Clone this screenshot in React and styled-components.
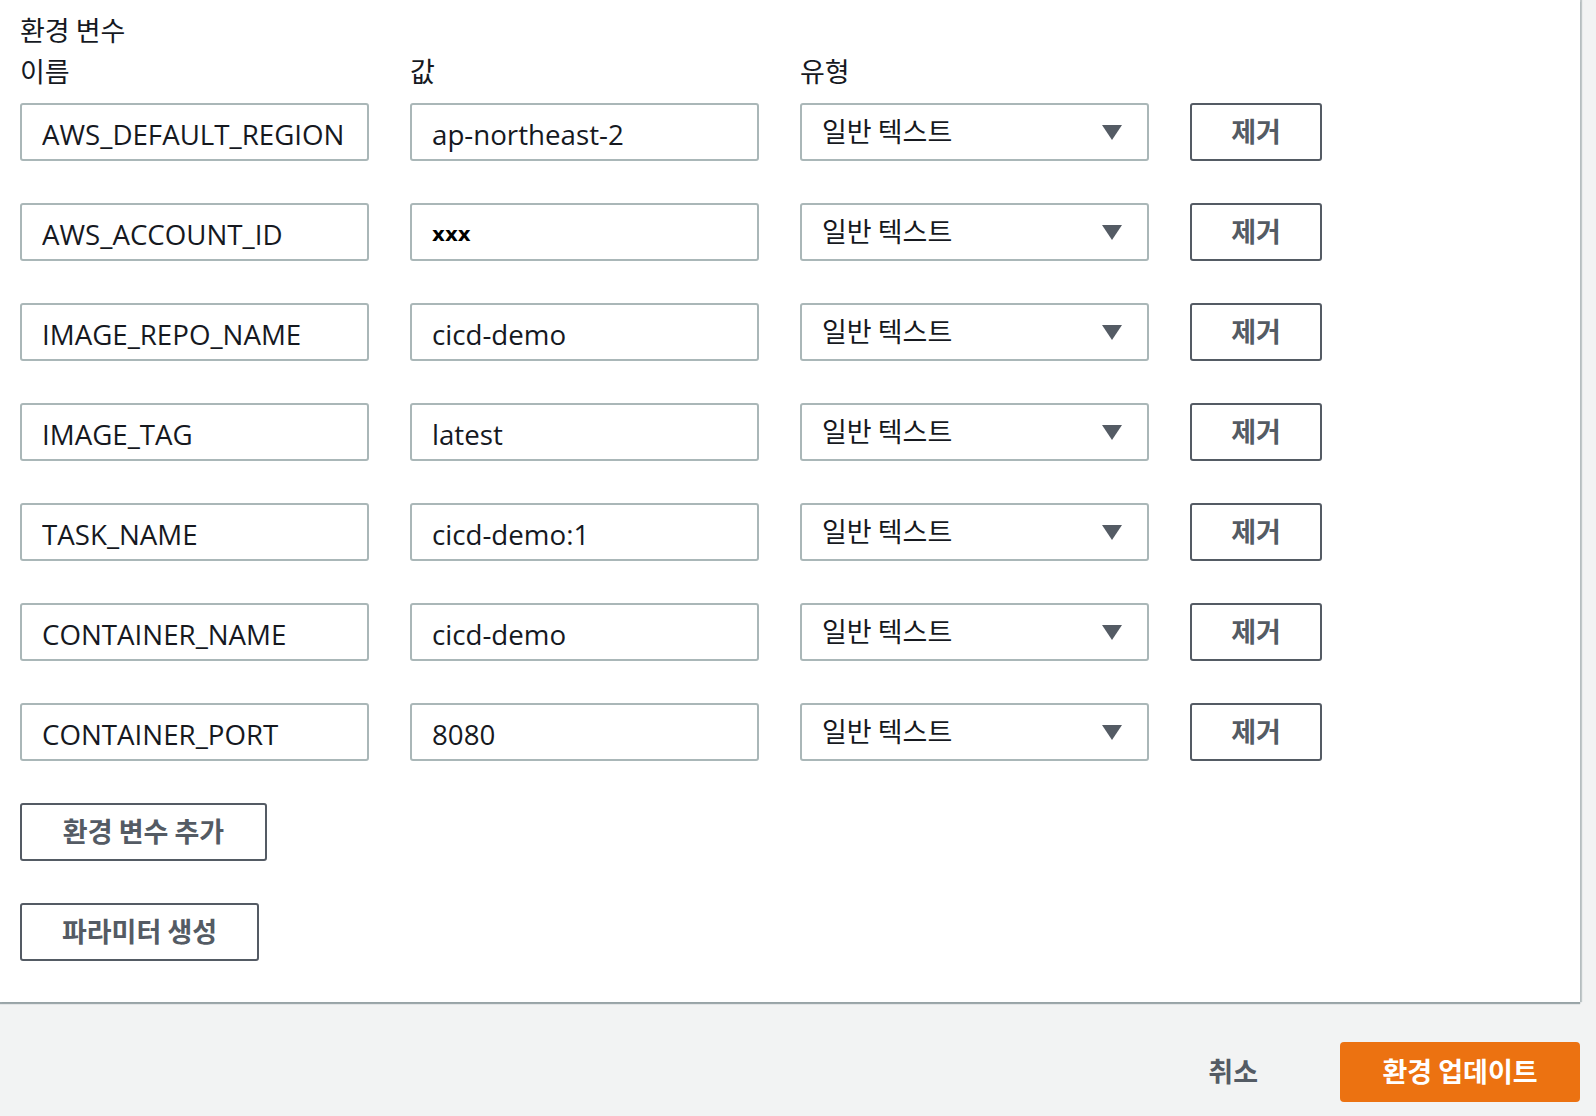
import React, { useState } from "react";
import styled, { createGlobalStyle } from "styled-components";

const GlobalStyle = createGlobalStyle`
  html, body {
    margin: 0;
    padding: 0;
    background: #f2f3f3;
  }
  body {
    font-family: "Noto Sans CJK KR", "Noto Sans", sans-serif;
    color: #16191f;
  }
`;

const initialVars = [
  { name: "AWS_DEFAULT_REGION", value: "ap-northeast-2" },
  { name: "AWS_ACCOUNT_ID", value: "xxx", masked: true },
  { name: "IMAGE_REPO_NAME", value: "cicd-demo" },
  { name: "IMAGE_TAG", value: "latest" },
  { name: "TASK_NAME", value: "cicd-demo:1" },
  { name: "CONTAINER_NAME", value: "cicd-demo" },
  { name: "CONTAINER_PORT", value: "8080" },
];

const App = () => {
  const [vars, setVars] = useState(initialVars);

  const changeHandle = (idx, key) => (e) => {
    const next = vars.slice();
    next[idx] = { ...next[idx], [key]: e.target.value };
    setVars(next);
  };

  const removeClick = (idx) => (evt) => {
    evt.preventDefault();
    setVars(vars.filter((_, i) => i !== idx));
  };

  const addClick = (evt) => {
    evt.preventDefault();
    setVars([...vars, { name: "", value: "" }]);
  };

  return (
    <StyledPage>
      <GlobalStyle />
      <StyledPanel>
        <StyledTitle>환경 변수</StyledTitle>
        <StyledGrid>
          <StyledColLabel>이름</StyledColLabel>
          <StyledColLabel>값</StyledColLabel>
          <StyledColLabel>유형</StyledColLabel>
          <span />
        </StyledGrid>

        <StyledRows>
          {vars.map((v, i) => (
            <React.Fragment key={i}>
              <StyledInput value={v.name} onChange={changeHandle(i, "name")} />
              <StyledInput
                value={v.value}
                $masked={v.masked}
                onChange={changeHandle(i, "value")}
              />
              <StyledSelect>
                <span>일반 텍스트</span>
                <StyledCaret viewBox="0 0 20 15">
                  <path d="M0 0 H20 L10 15 Z" />
                </StyledCaret>
              </StyledSelect>
              <StyledButton onClick={removeClick(i)}>제거</StyledButton>
            </React.Fragment>
          ))}
        </StyledRows>

        <StyledActions>
          <StyledButton $wide="247px" onClick={addClick}>환경 변수 추가</StyledButton>
          <StyledButton $wide="239px">파라미터 생성</StyledButton>
        </StyledActions>
      </StyledPanel>

      <StyledFooter>
        <StyledLinkButton>취소</StyledLinkButton>
        <StyledPrimaryButton>환경 업데이트</StyledPrimaryButton>
      </StyledFooter>
    </StyledPage>
  );
};
export default App;

const StyledPage = styled.div`
  width: 1596px;
  min-height: 1116px;
  background: #f2f3f3;
`;

const StyledPanel = styled.div`
  width: 1580px;
  box-sizing: border-box;
  background: #ffffff;
  padding: 10px 0 41px 20px;
  box-shadow: 0 2px 1px 0 rgba(0, 28, 36, 0.35), 2px 0 1px 0 rgba(0, 28, 36, 0.2);
`;

const StyledTitle = styled.div`
  font-size: 27px;
  line-height: 40px;
  height: 40px;
`;

const StyledGrid = styled.div`
  display: grid;
  grid-template-columns: 349px 349px 349px 132px;
  column-gap: 41px;
`;

const StyledColLabel = styled.div`
  font-size: 27px;
  line-height: 42px;
  height: 42px;
`;

const StyledRows = styled(StyledGrid)`
  margin-top: 11px;
  row-gap: 42px;
  grid-auto-rows: 58px;
`;

const StyledInput = styled.input`
  box-sizing: border-box;
  width: 100%;
  height: 58px;
  border: 2px solid #aab7b8;
  border-radius: 3px;
  padding: 4px 20px 0 20px;
  background: #fff;
  color: ${(p) => (p.$masked ? "#000" : "#16191f")};
  font-family: ${(p) => (p.$masked ? '"DejaVu Sans", sans-serif' : '"Open Sans", sans-serif')};
  font-size: ${(p) => (p.$masked ? "20px" : "27.7px")};
  font-weight: ${(p) => (p.$masked ? 700 : 400)};
  outline: none;
`;

const StyledSelect = styled.div`
  box-sizing: border-box;
  height: 58px;
  border: 2px solid #aab7b8;
  border-radius: 3px;
  padding: 0 25px 0 20px;
  display: flex;
  align-items: center;
  justify-content: space-between;
  font-size: 27px;
  color: #16191f;
  background: #fff;

  span {
    padding-bottom: 4px;
  }
`;

const StyledCaret = styled.svg`
  width: 20px;
  height: 15px;
  fill: #545b64;
`;

const StyledButton = styled.button`
  box-sizing: border-box;
  width: ${(p) => p.$wide || "100%"};
  height: 58px;
  border: 2px solid #545b64;
  border-radius: 3px;
  background: #fff;
  color: #545b64;
  font-family: "Noto Sans CJK KR", sans-serif;
  font-size: 27px;
  font-weight: 700;
  padding: 0 0 4px 0;
  cursor: pointer;
`;

const StyledActions = styled.div`
  margin-top: 42px;
  display: flex;
  flex-direction: column;
  align-items: flex-start;
  gap: 42px;
`;

const StyledFooter = styled.div`
  width: 1580px;
  display: flex;
  justify-content: flex-end;
  align-items: center;
  padding-top: 40px;
`;

const StyledLinkButton = styled.button`
  border: none;
  background: transparent;
  color: #545b64;
  font-family: "Noto Sans CJK KR", sans-serif;
  font-size: 27px;
  font-weight: 700;
  padding: 0 0 4px 0;
  margin-right: 82px;
  height: 60px;
  cursor: pointer;
`;

const StyledPrimaryButton = styled.button`
  box-sizing: border-box;
  width: 240px;
  height: 60px;
  border: none;
  border-radius: 4px;
  background: #ec7211;
  color: #fff;
  font-family: "Noto Sans CJK KR", sans-serif;
  font-size: 27px;
  font-weight: 700;
  padding: 0 0 4px 0;
  cursor: pointer;
`;
